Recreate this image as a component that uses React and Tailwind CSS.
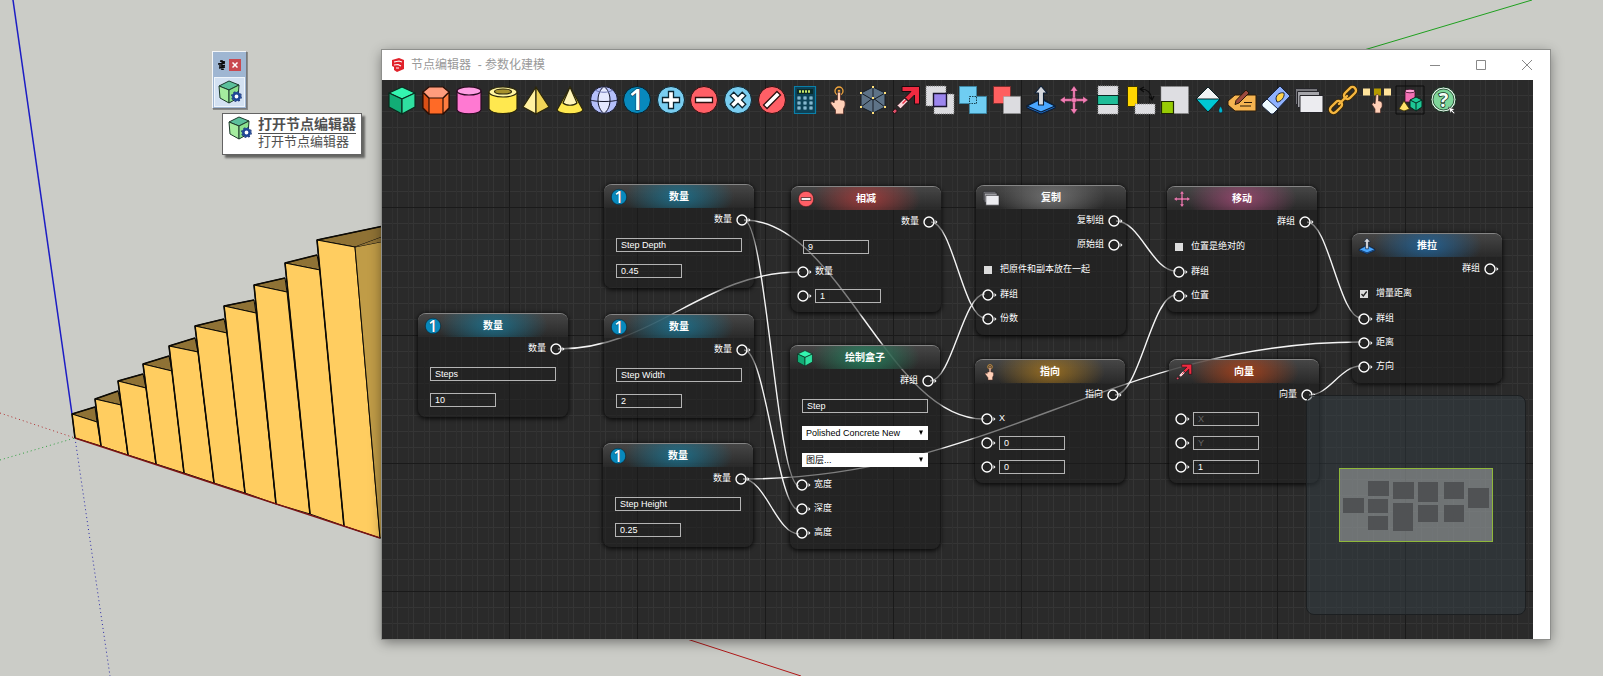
import { useState } from "react";

const icons = {
  box: (
    <g stroke="#0b2b1e" strokeWidth="1.2" strokeLinejoin="round">
      <path d="M14 1 27 7 14 13 1 7Z" fill="#34f5b0" />
      <path d="M1 7 14 13V28L1 21Z" fill="#12ad76" />
      <path d="M27 7 14 13V28L27 21Z" fill="#2fe0a0" />
    </g>
  ),
  prism: (
    <g stroke="#2b0f05" strokeWidth="1.2" strokeLinejoin="round">
      <path d="M1 6V22L7 28H21L27 22V6Z" fill="#ff6a26" />
      <path d="M1 6V22L7 28V12Z" fill="#d94f16" />
      <path d="M27 6V22L21 28V12Z" fill="#ff7c40" />
      <path d="M7 1H21L27 6 21 12H7L1 6Z" fill="#ff9c7d" />
    </g>
  ),
  cylinder: (
    <g stroke="#2b0a22" strokeWidth="1.2">
      <path d="M2 5V24C4 29 24 29 26 24V5" fill="#ff79d2" />
      <ellipse cx="14" cy="5" rx="12" ry="4" fill="#ff9ee3" />
    </g>
  ),
  tube: (
    <g stroke="#2b260a" strokeWidth="1.2">
      <path d="M0 6V23C3 29 25 29 28 23V6" fill="#ffe84f" />
      <ellipse cx="14" cy="6" rx="14" ry="5" fill="#fff4a0" />
      <ellipse cx="14" cy="5.5" rx="8.5" ry="2.5" fill="#a8922c" />
    </g>
  ),
  pyramid: (
    <g stroke="#2b260a" strokeWidth="1.2" strokeLinejoin="round">
      <path d="M14 1 1 21 14 28Z" fill="#fff0a0" />
      <path d="M14 1 27 21 14 28Z" fill="#f0d458" />
    </g>
  ),
  cone: (
    <g stroke="#2b260a" strokeWidth="1.2" strokeLinejoin="round">
      <path d="M14 1 1 24C4 29 24 29 27 24Z" fill="#ffe84f" />
      <path d="M14 1 7 17C10 20 18 20 21 17Z" fill="#fff4b8" />
    </g>
  ),
  sphere: (
    <g stroke="#15172b" strokeWidth="1" fill="none">
      <circle cx="14" cy="14" r="13.5" fill="#b4bffa" />
      <path d="M14 .5C6 6 6 22 14 27.5 22 22 22 6 14 .5Z" fill="#e4e8ff" />
      <path d="M.5 14C5 16 23 16 27.5 14" />
      <path d="M5 4C10 7 18 7 23 4" stroke="#6d76b5" />
    </g>
  ),
  number: (
    <g>
      <circle cx="14" cy="14" r="13.5" fill="#0889bd" stroke="#07202b" />
      <text x="13.5" y="24" textAnchor="middle" fontSize="28" fontWeight="600" fill="#fff" stroke="#0a2a3a" strokeWidth="1" paintOrder="stroke" fontFamily="Open Sans, sans-serif">1</text>
    </g>
  ),
  plus: (
    <g stroke="#0c2530">
      <circle cx="14" cy="14" r="13.5" fill="#79cdf0" />
      <path d="M11.500 5.500h5v6h6v5h-6v6h-5v-6h-6v-5h6Z" fill="#fff" strokeWidth="1.3" />
    </g>
  ),
  minus: (
    <g stroke="#301010">
      <circle cx="14" cy="14" r="13.5" fill="#ff5f66" />
      <path d="M5.500 11.500h17v5h-17Z" fill="#fff" strokeWidth="1.3" />
    </g>
  ),
  times: (
    <g stroke="#0c2530">
      <circle cx="14" cy="14" r="13.5" fill="#79cdf0" />
      <path d="M11.500 5.500h5v6h6v5h-6v6h-5v-6h-6v-5h6Z" fill="#fff" strokeWidth="1.3" transform="rotate(45 14 14)" />
    </g>
  ),
  divide: (
    <g stroke="#301010">
      <circle cx="14" cy="14" r="13.5" fill="#ff5f66" />
      <path d="M4.500 11.500h19v5h-19Z" fill="#fff" strokeWidth="1.3" transform="rotate(-45 14 14)" />
    </g>
  ),
  calc: (
    <g>
      <path d="M3.500 .5h21v27h-21Z" fill="#0d4257" stroke="#0a7fa8" strokeWidth="1.2" />
      <path d="M6 3h16v5H6Z" fill="#0a2b2a" />
      <path d="M8 5.500h12" stroke="#c8e86a" strokeWidth="2.5" strokeDasharray="2 1" />
      <path d="M6.500 12h15M6.500 17h15M6.500 22h15" stroke="#a9d9ef" strokeWidth="3" strokeDasharray="3 3" />
      <path d="M7.500 12h13M7.500 17h13M7.500 22h13" stroke="#17566f" strokeWidth="1" strokeDasharray="1 5" />
    </g>
  ),
  point: (
    <g>
      <circle cx="14" cy="5" r="4" fill="none" stroke="#f0a43c" strokeWidth="1.3" />
      <circle cx="14" cy="5" r="1.3" fill="#f0a43c" />
      <path d="M12.500 7.500C12.500 5.500 15.500 5.500 15.500 7.500V14C20 14 20.500 15 20 20L18.500 23V28H10.500V24L6 18C5 15.500 7.500 15 9 17L9.500 14H12.500Z" fill="#ffd0b8" stroke="#55302a" strokeWidth=".8" />
    </g>
  ),
  wirebox: (
    <g>
      <path d="M14 1 26 7V21L14 27 2 21V7Z" fill="#5e7387" />
      <path d="M14 1 26 7V21L14 27 2 21V7ZM2 7 14 14 26 7M14 14V27M2 21 14 12 26 21M14 1V12" fill="none" stroke="#161d24" />
      <path d="M13 0h2v2h-2ZM1 6h2v2H1ZM25 6h2v2h-2ZM1 20h2v2H1ZM25 20h2v2h-2ZM13 26h2v2h-2ZM13 11h2v2h-2Z" fill="#ffe07a" />
    </g>
  ),
  vector: (
    <g stroke="#1a0a0e" strokeLinejoin="round">
      <path d="M10 .5H27.500V18H22.500V9L16.500 15 13 11.500 19 5.500H10Z" fill="#ee2a40" />
      <path d="M12.500 12 16 15.500 8.500 23 5 19.500Z" fill="#fbd3d8" />
      <path d="M10.500 17.500 14 14" stroke="#ee2a40" strokeWidth="1.5" />
      <path d="M3 22.500 5.500 25 2.500 28 .5 25.500Z" fill="#e0506a" />
    </g>
  ),
  intersect: (
    <g>
      <path d="M0 0h20v20H0Z" fill="#dcdce0" stroke="#777" strokeDasharray="1 1" />
      <path d="M8 8h20v20H8Z" fill="#dcdce0" stroke="#777" strokeDasharray="1 1" />
      <path d="M7.500 7.500h13v13h-13Z" fill="#9b85ee" stroke="#18122e" strokeWidth="1.4" />
    </g>
  ),
  union: (
    <g>
      <path d="M.5 .5h17v10h10v17h-17v-10H.5Z" fill="#6fcdf2" stroke="#3d86a3" />
      <path d="M10.500 10.500h7v7h-7Z" fill="none" stroke="#17404f" strokeDasharray="1.5 1" />
    </g>
  ),
  subtract: (
    <g>
      <path d="M.5 .5h17v17H.5Z" fill="#ff5f5f" stroke="#7c2d2d" />
      <path d="M10.500 10.500h17v17h-17Z" fill="#dcdce0" stroke="#999" strokeDasharray="1 1" />
    </g>
  ),
  push: (
    <g stroke="#0a1c33" strokeWidth="1.1" strokeLinejoin="round">
      <path d="M0 20 14 12 28 20V22L14 28 0 22Z" fill="#2273d1" />
      <path d="M0 20 14 13 28 20 14 26Z" fill="#49a6ff" />
      <path d="M14 0 20 7H16.500V19H11.500V7H8Z" fill="#d5d7dc" />
    </g>
  ),
  move: (
    <g fill="#f27fb5" stroke="#571c3a" strokeWidth=".3">
      <path d="M14 0 17.500 5H15.200V12.800H23V10.500L28 14 23 17.500V15.200H15.200V23H17.500L14 28 10.500 23H12.800V15.200H5V17.500L0 14 5 10.500V12.800H12.800V5H10.500Z" />
      <circle cx="14" cy="14" r="2.5" />
    </g>
  ),
  align: (
    <g>
      <path d="M4 0h20v28H4Z" fill="#dedee2" stroke="#999" strokeDasharray="1 1" />
      <path d="M3.500 9.500h21v9h-21Z" fill="#1fbd98" stroke="#0b2b24" strokeWidth="1.2" />
    </g>
  ),
  rotate: (
    <g>
      <path d="M.5 .5h10v20H.5Z" fill="#ffd600" stroke="#3b3200" />
      <path d="M8 18h20v10H8Z" fill="#dedee2" stroke="#888" strokeDasharray="1 1" />
      <path d="M14 3C20 3 24 7 25 13M22 10.500 25 14 27 10M17 1 13 3 17 6" fill="none" stroke="#0c0c0c" strokeWidth="1.2" />
    </g>
  ),
  scale: (
    <g>
      <path d="M0 .5h27.500v27H0Z" fill="#dedee2" stroke="#888" strokeDasharray="1 1" />
      <path d="M.5 15.500h12v12H.5Z" fill="#97cc04" stroke="#1e2b00" strokeWidth="1.2" />
    </g>
  ),
  paint: (
    <g stroke="#0b2024" strokeLinejoin="round">
      <path d="M13 1 25 13 13 26 1 13Z" fill="#f1f3f4" />
      <path d="M1 13H25L13 26Z" fill="#00c8d4" />
      <path d="M25.500 20C24 23 23.500 24 24 26 25 27.500 27.500 27 27.500 25 27.500 23 26.500 22 25.500 20Z" fill="#00b7d4" strokeWidth=".5" />
    </g>
  ),
  tag: (
    <g stroke="#2b1a08" strokeLinejoin="round">
      <path d="M7 9H28V25H7L0 19V15Z" fill="#f5b451" />
      <path d="M12 20H23M16 16.500H24" strokeWidth="1.1" />
      <path d="M18 4 21 7 11 17 7 18.500 8 14.500Z" fill="#9c4a3e" />
    </g>
  ),
  eraser: (
    <g stroke="#18233b" strokeLinejoin="round">
      <path d="M18 0 28 10 11 28 0 18Z" fill="#8fb2ff" />
      <path d="M5 13 16 23 11 28H9L0 20V18Z" fill="#eefaff" />
      <path d="M14 13C14 8 19 6 22 7 23 11 19 16 15 16Z" fill="#ffd24d" />
    </g>
  ),
  copy: (
    <g stroke="#26262b">
      <path d="M.5 2.500h22v16H.5Z" fill="#77777c" />
      <path d="M2.500 5.500h22v16h-22Z" fill="#a5a5aa" />
      <path d="M5 9.500h23v17H5Z" fill="#ececf0" />
    </g>
  ),
  link: (
    <g fill="none" strokeLinecap="round">
      <g stroke="#3b2906" strokeWidth="4">
        <rect x="14" y="3.5" width="14" height="7" rx="3.5" transform="rotate(-45 21 7)" />
        <rect x="0" y="17.5" width="14" height="7" rx="3.5" transform="rotate(-45 7 21)" />
        <path d="M10 18 18 10" />
      </g>
      <g stroke="#f5b63f" strokeWidth="2.4">
        <rect x="14" y="3.5" width="14" height="7" rx="3.5" transform="rotate(-45 21 7)" />
        <rect x="0" y="17.5" width="14" height="7" rx="3.5" transform="rotate(-45 7 21)" />
        <path d="M10 18 18 10" />
      </g>
    </g>
  ),
  pick: (
    <g>
      <path d="M0 2.500h7v7H0ZM21 2.500h7v7h-7Z" fill="#ffe39b" />
      <path d="M11 2.500h7v7h-7Z" fill="#b59a00" />
      <path d="M13 9.500C13 8 15.500 8 15.500 9.500V15C19 15 19.500 17 19 21L17.500 23V27H12V23L9 18.500 10.500 16.500 12 18Z" fill="#ffd0b8" stroke="#55302a" strokeWidth=".7" />
    </g>
  ),
  shapes: (
    <g strokeLinejoin="round">
      <path d="M0 0H28V28H0Z" fill="none" stroke="#0d0d0d" />
      <path d="M9 5V16H19V5" fill="#f36fb4" stroke="#3b0f28" strokeWidth=".8" />
      <ellipse cx="14" cy="5" rx="5" ry="1.8" fill="#ff9fd4" stroke="#3b0f28" strokeWidth=".8" />
      <path d="M8 15 13.500 23 8 25 3 23Z" fill="#ffe168" stroke="#3b3200" strokeWidth=".8" />
      <path d="M20 11 26 14V21L20 25 14 21V14Z" fill="#1dc795" stroke="#06281d" />
      <path d="M14 14 20 17 26 14M20 17V25" fill="none" stroke="#06281d" />
    </g>
  ),
  help: (
    <g>
      <circle cx="13.5" cy="13.5" r="12.5" fill="#e9fff0" stroke="#12301d" />
      <circle cx="13.5" cy="13.5" r="10.5" fill="#7ed69a" stroke="#12301d" strokeWidth=".8" />
      <text x="13.5" y="21" textAnchor="middle" fontSize="20" fontWeight="bold" fill="#f4fff8" stroke="#12301d" strokeWidth="1.6" paintOrder="stroke" fontFamily="Open Sans, sans-serif">?</text>
      <path d="M18.500 21 25 23.500 22.500 24.500 25 27 24 28 21.500 25.500 20.500 27.500Z" fill="#fff" stroke="#111" strokeWidth=".5" />
    </g>
  ),
};

const tools = [
  ["box", "绘制盒子"],
  ["prism", "绘制棱柱"],
  ["cylinder", "绘制圆柱"],
  ["tube", "绘制圆管"],
  ["pyramid", "绘制棱锥"],
  ["cone", "绘制圆锥"],
  ["sphere", "绘制球体"],
  ["number", "数量"],
  ["plus", "相加"],
  ["minus", "相减"],
  ["times", "相乘"],
  ["divide", "相除"],
  ["calc", "计算"],
  ["point", "指向"],
  ["wirebox", "顶点"],
  ["vector", "向量"],
  ["intersect", "交集"],
  ["union", "并集"],
  ["subtract", "差集"],
  ["push", "推拉"],
  ["move", "移动"],
  ["align", "对齐"],
  ["rotate", "旋转"],
  ["scale", "缩放"],
  ["paint", "材质"],
  ["tag", "标签"],
  ["eraser", "擦除"],
  ["copy", "复制"],
  ["link", "连接"],
  ["pick", "选择"],
  ["shapes", "群组"],
  ["help", "帮助"],
];

const glow = {
  blue: "bg-[radial-gradient(ellipse_55px_28px_at_center,rgba(20,125,160,.75),transparent)]",
  red: "bg-[radial-gradient(ellipse_55px_28px_at_center,rgba(190,60,60,.75),transparent)]",
  gray: "bg-[radial-gradient(ellipse_55px_28px_at_center,rgba(130,130,130,.75),transparent)]",
  pink: "bg-[radial-gradient(ellipse_55px_28px_at_center,rgba(175,75,125,.75),transparent)]",
  sky: "bg-[radial-gradient(ellipse_55px_28px_at_center,rgba(30,105,165,.8),transparent)]",
  green: "bg-[radial-gradient(ellipse_55px_28px_at_center,rgba(30,150,105,.75),transparent)]",
  amber: "bg-[radial-gradient(ellipse_55px_28px_at_center,rgba(180,125,25,.75),transparent)]",
  orange: "bg-[radial-gradient(ellipse_55px_28px_at_center,rgba(185,65,20,.8),transparent)]",
};

// row kinds: out, in, text (wide box), num (short box), field (port + box), check, select
const numberRows = (name, value) => [
  { kind: "out", label: "数量" },
  { kind: "text", label: "名称", value: name },
  { kind: "num", label: "数值", value },
];

const nodes = [
  { id: "depth", x: 222, y: 104, icon: "number", color: "blue", title: "数量", rows: numberRows("Step Depth", "0.45") },
  { id: "steps", x: 36, y: 233, icon: "number", color: "blue", title: "数量", rows: numberRows("Steps", "10") },
  { id: "width", x: 222, y: 234, icon: "number", color: "blue", title: "数量", rows: numberRows("Step Width", "2") },
  { id: "height", x: 221, y: 363, icon: "number", color: "blue", title: "数量", rows: numberRows("Step Height", "0.25") },
  {
    id: "minus", x: 409, y: 106, icon: "minus", color: "red", title: "相减",
    rows: [
      { kind: "out", label: "数量" },
      { kind: "num", label: "结果", value: "9" },
      { kind: "in", label: "数量" },
      { kind: "field", label: "减数", value: "1" },
    ],
  },
  {
    id: "box", x: 408, y: 265, icon: "box", color: "green", title: "绘制盒子",
    rows: [
      { kind: "out", label: "群组" },
      { kind: "text", label: "名称", value: "Step" },
      { kind: "select", label: "材质", value: "Polished Concrete New" },
      { kind: "select", label: "图层", value: "图层..." },
      { kind: "in", label: "宽度" },
      { kind: "in", label: "深度" },
      { kind: "in", label: "高度" },
    ],
  },
  {
    id: "copy", x: 594, y: 105, icon: "copy", color: "gray", title: "复制",
    rows: [
      { kind: "out", label: "复制组" },
      { kind: "out", label: "原始组" },
      { kind: "check", label: "把原件和副本放在一起" },
      { kind: "in", label: "群组" },
      { kind: "in", label: "份数" },
    ],
  },
  {
    id: "point", x: 593, y: 279, icon: "point", color: "amber", title: "指向",
    rows: [
      { kind: "out", label: "指向" },
      { kind: "in", label: "X" },
      { kind: "field", label: "Y", value: "0" },
      { kind: "field", label: "Z", value: "0" },
    ],
  },
  {
    id: "move", x: 785, y: 106, icon: "move", color: "pink", title: "移动",
    rows: [
      { kind: "out", label: "群组" },
      { kind: "check", label: "位置是绝对的" },
      { kind: "in", label: "群组" },
      { kind: "in", label: "位置" },
    ],
  },
  {
    id: "vector", x: 787, y: 279, icon: "vector", color: "orange", title: "向量",
    rows: [
      { kind: "out", label: "向量" },
      { kind: "field", label: "X", value: "", placeholder: "X" },
      { kind: "field", label: "Y", value: "", placeholder: "Y" },
      { kind: "field", label: "Z", value: "1" },
    ],
  },
  {
    id: "push", x: 970, y: 153, icon: "push", color: "sky", title: "推拉",
    rows: [
      { kind: "out", label: "群组" },
      { kind: "check", label: "增量距离", checked: true },
      { kind: "in", label: "群组" },
      { kind: "in", label: "距离" },
      { kind: "in", label: "方向" },
    ],
  },
];

// [x1, y1, x2, y2]
const wires = [
  [362, 140, 602, 339],
  [362, 140, 417, 406],
  [362, 270, 417, 430],
  [361, 399, 417, 454],
  [361, 399, 979, 262],
  [176, 269, 418, 192],
  [549, 142, 603, 238],
  [548, 301, 603, 214],
  [734, 141, 794, 191],
  [733, 315, 794, 215],
  [925, 142, 979, 238],
  [927, 315, 979, 286],
];

function wirePath([x1, y1, x2, y2]) {
  const bend = (x2 - x1) * 0.4;
  return `M${x1} ${y1} C${x1 + bend} ${y1} ${x2 - bend} ${y2} ${x2} ${y2}`;
}

const Icon = ({ name, className }) => (
  <svg viewBox="0 0 28 28" className={className} overflow="visible" aria-hidden="true">
    {icons[name]}
  </svg>
);

const Port = () => (
  <svg viewBox="0 0 18 12" className="w-[18px] h-3 shrink-0" aria-hidden="true">
    <circle cx="6" cy="6" r="5" fill="none" stroke="#fff" strokeWidth="1.4" />
    <path d="M12.500 4 14.500 6 12.500 8Z" fill="#fff" />
  </svg>
);

const Field = ({ row, id, className }) => {
  const [value, setValue] = useState(row.value);
  return (
    <input
      id={id}
      aria-label={row.label}
      value={value}
      placeholder={row.placeholder}
      onChange={(e) => setValue(e.target.value)}
      className={`h-3.5 border border-[#b4b4b4] bg-transparent px-1 text-[9px] leading-3 text-white outline-none placeholder:text-[#666] ${className}`}
    />
  );
};

const Row = ({ row, id }) => {
  if (row.kind === "out") {
    return (
      <div className="flex h-6 items-center justify-end gap-1 text-[9px]">
        <span>{row.label}</span>
        <Port />
      </div>
    );
  }
  if (row.kind === "in") {
    return (
      <div className="flex h-6 items-center pl-1.5 text-[9px]">
        <Port />
        <span>{row.label}</span>
      </div>
    );
  }
  if (row.kind === "field") {
    return (
      <div className="flex h-6 items-center pl-1.5">
        <Port />
        <Field row={row} id={id} className="w-[66px]" />
      </div>
    );
  }
  if (row.kind === "check") {
    return (
      <div className="flex h-[26px] items-center pl-2 text-[9px]">
        <label className="flex items-center gap-2">
          <input id={id} type="checkbox" defaultChecked={row.checked} className="peer size-2 appearance-none bg-[#dcdcdc]" />
          <svg viewBox="0 0 8 8" className="-ml-4 hidden size-2 peer-checked:block" aria-hidden="true">
            <path d="M1.500 4 3.300 6 6.700 1.500" fill="none" stroke="#222" strokeWidth="1.3" />
          </svg>
          <span>{row.label}</span>
        </label>
      </div>
    );
  }
  if (row.kind === "select") {
    return (
      <div className="flex h-[27px] items-center px-3">
        <div className="relative w-full">
          <select id={id} aria-label={row.label} className="block h-3.5 w-full appearance-none bg-white px-1 text-[9px] leading-3 text-black">
            <option>{row.value}</option>
          </select>
          <svg viewBox="0 0 6 6" className="pointer-events-none absolute right-1 top-1 size-1.5" aria-hidden="true">
            <path d="M1 .5h4L3 5Z" fill="#000" />
          </svg>
        </div>
      </div>
    );
  }
  return (
    <div className="flex h-[26px] items-center px-3">
      <Field row={row} id={id} className={row.kind === "text" ? "w-full" : "w-[66px]"} />
    </div>
  );
};

const Node = ({ node }) => (
  <section
    className="absolute w-[150px] overflow-hidden rounded-lg border-t border-[#858585] bg-[#1e1e1e]/55 pb-1 text-white shadow-[0_1px_4px_1px_rgba(0,0,0,.75)]"
    style={{ left: node.x, top: node.y }}
  >
    <div className="bg-linear-to-b from-[#555]/70 to-[#2c2c2c]/70">
      <header className={`flex h-[23px] items-center px-[7px] ${glow[node.color]}`}>
        <Icon name={node.icon} className="size-4" />
        <h2 className="flex-1 pr-4 text-center text-[10px] font-bold">{node.title}</h2>
      </header>
    </div>
    {node.rows.map((row, i) => (
      <Row key={i} row={row} id={`${node.id}-${i}`} />
    ))}
  </section>
);

const miniNodes = [
  [4, 30, 21, 15],
  [29, 13, 21, 15],
  [29, 31, 20, 14],
  [29, 48, 20, 14],
  [54, 14, 21, 17],
  [54, 35, 20, 28],
  [79, 14, 20, 20],
  [79, 37, 20, 17],
  [105, 14, 20, 17],
  [105, 37, 20, 17],
  [129, 20, 21, 20],
];

const Minimap = () => (
  <div className="absolute bottom-6 right-[7px] flex size-[220px] items-center justify-center rounded-lg border border-[#1c1f21] bg-[#364048]/45">
    <svg viewBox="0 0 154 74" className="h-[74px] w-[154px]" aria-hidden="true">
      <rect x=".5" y=".5" width="153" height="73" fill="#a4a8a8" fillOpacity=".55" stroke="#8fb83a" />
      {miniNodes.map(([x, y, w, h], i) => (
        <rect key={i} x={x} y={y} width={w} height={h} fill="#505254" />
      ))}
    </svg>
  </div>
);

const Canvas = () => (
  <div className="relative min-w-0 flex-1 overflow-hidden bg-[#2a2a2a]">
    <svg className="absolute inset-0 size-full" aria-hidden="true">
      <defs>
        <pattern id="minor" width="16" height="16" patternUnits="userSpaceOnUse">
          <path d="M0 15.500H16M15.500 0V16" stroke="#353535" />
          <path d="M10.500 0V16" stroke="#303030" />
        </pattern>
        <pattern id="major" width="128" height="128" patternUnits="userSpaceOnUse">
          <path d="M0 127.500H128M127.500 0V128" stroke="#1a1a1a" />
        </pattern>
      </defs>
      <rect width="100%" height="100%" fill="url(#minor)" />
      <rect width="100%" height="100%" fill="url(#major)" />
      <g fill="none" stroke="#f4f4f4" strokeWidth="1.4">
        {wires.map((w, i) => (
          <path key={i} d={wirePath(w)} />
        ))}
      </g>
    </svg>
    <nav className="relative flex max-w-[1082px] justify-between px-1.5 py-1.5">
      {tools.map(([name, label]) => (
        <button key={name} type="button" aria-label={label}>
          <Icon name={name} className="size-7" />
        </button>
      ))}
    </nav>
    {nodes.map((node) => (
      <Node key={node.id} node={node} />
    ))}
    <Minimap />
  </div>
);

const EditorWindow = () => (
  <main className="absolute bottom-[37px] left-[382px] right-[53px] top-[50px] flex flex-col bg-white shadow-[0_0_0_1px_#8e8f8c,0_3px_12px_rgba(0,0,0,.45)]">
    <div className="flex h-[30px] shrink-0 items-center pl-2">
      <svg viewBox="0 0 16 16" className="size-4" aria-hidden="true">
        <path d="M2 3 9 1 14 3V12L7 15 4 13V10L2 9Z" fill="#e1222b" />
        <path d="M4 5 9 4 12 5M4 8 8 7.500 11 9M6 11 9 11" fill="none" stroke="#fff" strokeWidth="1.2" />
      </svg>
      <h1 className="flex-1 whitespace-pre pl-[5px] text-xs text-[#999]">节点编辑器  - 参数化建模</h1>
      <div className="flex">
        <button type="button" aria-label="最小化" className="flex h-[30px] w-[46px] items-center justify-center">
          <svg viewBox="0 0 10 10" className="size-2.5" stroke="#888"><path d="M0 5.500H10" /></svg>
        </button>
        <button type="button" aria-label="最大化" className="flex h-[30px] w-[46px] items-center justify-center">
          <svg viewBox="0 0 10 10" className="size-2.5" fill="none" stroke="#888"><path d="M.5 .5H9.500V9.500H.5Z" /></svg>
        </button>
        <button type="button" aria-label="关闭" className="flex h-[30px] w-[46px] items-center justify-center">
          <svg viewBox="0 0 10 10" className="size-2.5" stroke="#888"><path d="M0 0 10 10M10 0 0 10" /></svg>
        </button>
      </div>
    </div>
    <div className="flex flex-1 pr-[17px]">
      <Canvas />
    </div>
  </main>
);

const EditorIcon = ({ className }) => (
  <svg viewBox="0 0 24 24" className={className} aria-hidden="true">
    <g stroke="#1d3a2c" strokeLinejoin="round">
      <path d="M11 1 21 5 11 10 1 6Z" fill="#5cc09b" />
      <path d="M1 6 11 10V23L2 18Z" fill="#a5ec9f" />
      <path d="M21 5 11 10V23L20 18Z" fill="#8be08d" />
    </g>
    <circle cx="18.5" cy="16.500" r="4.800" fill="none" stroke="#1a3576" strokeWidth="1.2" strokeDasharray="2 1.770" />
    <circle cx="18.5" cy="16.500" r="3.200" fill="#fff" stroke="#1f4696" strokeWidth="2.6" />
  </svg>
);

const Palette = () => (
  <div className="absolute left-[212px] top-[51px]">
    <div className="w-[35px] border border-[#f4f6f8] border-b-[#77797c] border-r-[#77797c] bg-[#9fb6d2] p-px shadow-[1px_1px_0_#8b8c8a]">
      <div className="flex h-6 items-center justify-between px-1">
        <svg viewBox="0 0 8 10" className="h-2.5 w-2" fill="none" stroke="#0a0a0a" strokeWidth="1.3" aria-hidden="true">
          <path d="M2 1 7 2M0 4 7 3M1 6 7 5.500M1 8 7 7M3 10 6 9M4 0V10" />
        </svg>
        <button type="button" aria-label="关闭工具栏" className="flex size-3 items-center justify-center bg-[#c9484f]">
          <svg viewBox="0 0 6 6" className="size-1.5" stroke="#fff" strokeWidth="1.5"><path d="M.5 .5 5.500 5.500M5.500 .5 .5 5.500" /></svg>
        </button>
      </div>
      <button type="button" aria-label="打开节点编辑器" className="flex h-[30px] w-full items-center justify-center border border-[#eef4fb] bg-[#d3e1f2]">
        <EditorIcon className="size-6" />
      </button>
    </div>
    <div role="tooltip" className="ml-2.5 mt-1 flex h-[42px] w-[140px] gap-1.5 border border-[#636363] bg-white py-0.5 pl-[5px] text-[#505050] shadow-[3px_3px_2px_rgba(0,0,0,.5)]">
      <EditorIcon className="size-6" />
      <div>
        <p className="h-[18px] border-b border-[#505050] text-sm font-bold leading-4">打开节点编辑器</p>
        <p className="text-[13px] leading-4">打开节点编辑器</p>
      </div>
    </div>
  </div>
);

// front-left top, front-right top, back-right top, bottom-left, bottom-right
const stairs = [
  [[72, 414], [97, 422], [95, 407], [75, 438], [101, 446]],
  [[95, 399], [121, 405], [118, 391], [101, 446], [128, 455]],
  [[118, 381], [146, 388], [143, 374], [128, 455], [156, 464]],
  [[143, 364], [172, 371], [169, 356], [156, 464], [184, 473]],
  [[169, 346], [198, 352], [195, 338], [184, 473], [214, 483]],
  [[195, 326], [227, 333], [224, 319], [214, 483], [245, 493]],
  [[224, 306], [256, 313], [254, 300], [245, 493], [276, 504]],
  [[254, 285], [287, 292], [285, 278], [276, 504], [310, 514]],
  [[285, 263], [320, 270], [317, 255], [310, 514], [344, 526]],
  [[317, 240], [355, 247], [450, 212], [344, 526], [380, 538]],
];

const Scene = () => (
  <svg className="absolute inset-0 size-full" aria-hidden="true">
    <g fill="none">
      <path d="M13 0 72 414" stroke="#1c1cc4" strokeWidth="1.5" />
      <path d="M0 413 75 438" stroke="#b03030" strokeDasharray="1 3" />
      <path d="M0 460 75 438" stroke="#30a040" strokeDasharray="1 3" />
      <path d="M75 438 110 676" stroke="#2a2aa8" strokeDasharray="1 3" />
      <path d="M1364 50 1532 0" stroke="#1fa01f" />
      <path d="M687 639 801 676" stroke="#b01818" />
    </g>
    <g stroke="#0c0a05" strokeLinejoin="round">
      {stairs.map(([fl, fr, br, bl, b]) => (
        <g key={fl[0]}>
          <path d={`M${fl} ${br} ${fr}Z`} fill="#8f7235" />
          <path d={`M${fl} ${fr} ${b} ${bl}Z`} fill="#ffcd60" />
          <path d={`M${bl} ${fl} ${br}`} fill="none" strokeWidth="1.6" />
        </g>
      ))}
      <path d="M355 247 450 228V538H380Z" fill="#c09c47" />
      <path d="M355 247 450 212V228Z" fill="#8f7235" stroke="none" />
      <path d="M75 438 380 538" stroke="#7a1414" strokeWidth="1.5" />
    </g>
  </svg>
);

export default function App() {
  return (
    <div className="relative h-screen overflow-hidden bg-[#cbccc7] font-['Liberation_Sans','Noto_Sans_CJK_SC',sans-serif]">
      <Scene />
      <Palette />
      <EditorWindow />
    </div>
  );
}
